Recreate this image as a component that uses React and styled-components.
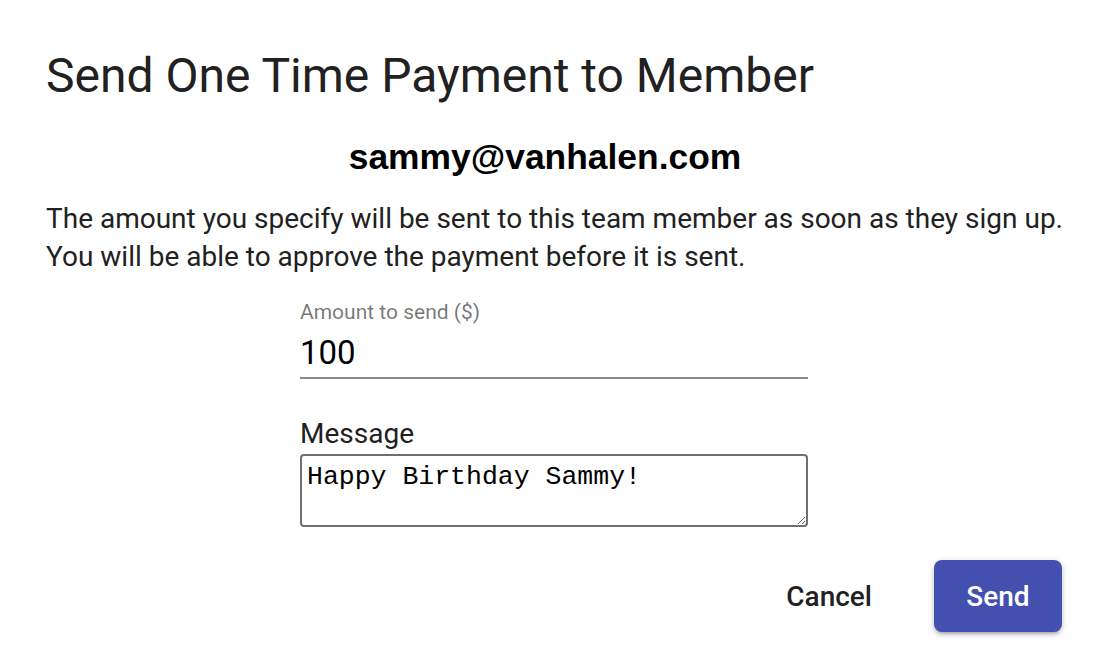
import React from 'react'
import styled, { createGlobalStyle } from 'styled-components'

const Global = createGlobalStyle`
  html, body {
    margin: 0;
    padding: 0;
    background: #ffffff;
  }
  body {
    font-family: Roboto, "Noto Sans", sans-serif;
    color: rgba(0, 0, 0, 0.87);
  }
`

function App() {
  return (
    <>
      <Global />
      <Dialog>
        <Title>Send One Time Payment to Member</Title>
        <Content>
          <Email>sammy@vanhalen.com</Email>
          <Body>
            <Line>The amount you specify will be sent to this team member as soon as they sign up.</Line>
            <Line>You will be able to approve the payment before it is sent.</Line>
          </Body>
          <Form>
            <Field>
              <SmallLabel>Amount to send ($)</SmallLabel>
              <AmountInput defaultValue="100" />
            </Field>
            <Field>
              <Label>Message</Label>
              <MessageBox defaultValue="Happy Birthday Sammy!" />
            </Field>
          </Form>
        </Content>
        <Actions>
          <TextButton>Cancel</TextButton>
          <PrimaryButton>Send</PrimaryButton>
        </Actions>
      </Dialog>
    </>
  )
}
export default App

const Dialog = styled.div`
  width: 1108px;
  height: 662px;
  box-sizing: border-box;
  padding: 44px 46px 0 46px;
  display: flex;
  flex-direction: column;
`

const Title = styled.h2`
  margin: 0;
  font-size: 48px;
  font-weight: 400;
  line-height: 64px;
  color: #212121;
  letter-spacing: 0;
`

const Content = styled.div`
  display: flex;
  flex-direction: column;
`

const Email = styled.div`
  margin-top: 27px;
  padding-right: 18px;
  text-align: center;
  font-family: "Liberation Sans", Arial, sans-serif;
  font-weight: 700;
  font-size: 35.4px;
  line-height: 44px;
  color: #000;
`

const Body = styled.p`
  margin: 21px 0 0 0;
  font-size: 28px;
  line-height: 38px;
  color: #212121;
`

const Line = styled.span`
  display: block;
  white-space: nowrap;
`

const Form = styled.div`
  width: 508px;
  align-self: center;
  display: flex;
  flex-direction: column;
  gap: 37px;
  margin-top: 23px;
`

const Field = styled.div`
  display: flex;
  flex-direction: column;
`

const SmallLabel = styled.label`
  font-size: 21px;
  line-height: 26px;
  color: rgba(0, 0, 0, 0.54);
`

const AmountInput = styled.input`
  border: none;
  border-bottom: 2px solid #8a8a8a;
  outline: none;
  padding: 9px 0 5px 0;
  margin: 0;
  font-family: Roboto, sans-serif;
  font-size: 33px;
  line-height: 38px;
  color: #000;
  background: transparent;
`

const Label = styled.label`
  font-size: 28px;
  line-height: 36px;
  color: #212121;
`

const MessageBox = styled.textarea`
  box-sizing: border-box;
  height: 73px;
  margin: 2px 0 0 0;
  padding: 6px 5px;
  border: 2px solid #6f6f6f;
  border-radius: 4px;
  font-family: "Liberation Mono", "Courier New", monospace;
  font-size: 26.5px;
  line-height: 30px;
  color: #000;
  resize: vertical;
  outline: none;
`

const Actions = styled.div`
  display: flex;
  justify-content: flex-end;
  align-items: center;
  gap: 46px;
  margin-top: 33px;
`

const TextButton = styled.button`
  border: none;
  background: transparent;
  font-family: Roboto, sans-serif;
  font-weight: 500;
  font-size: 28px;
  color: #212121;
  padding: 0 16px;
  height: 72px;
  cursor: pointer;
`

const PrimaryButton = styled.button`
  border: none;
  background: #4350b0;
  color: #fff;
  font-family: Roboto, sans-serif;
  font-weight: 500;
  font-size: 28px;
  width: 128px;
  height: 72px;
  border-radius: 8px;
  box-shadow: 0 3px 3px -2px rgba(0,0,0,0.2), 0 3px 4px 0 rgba(0,0,0,0.14), 0 1px 8px 0 rgba(0,0,0,0.12);
  cursor: pointer;
`
